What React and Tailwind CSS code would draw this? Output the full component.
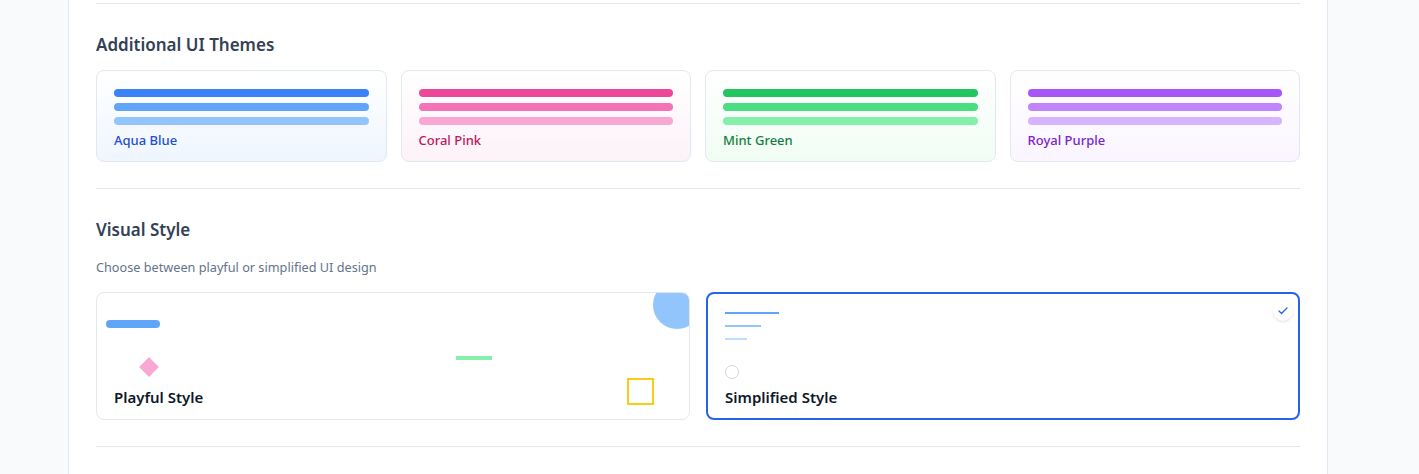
import { Check } from 'lucide-react';

const themes = [
  {
    name: 'Aqua Blue',
    card: 'to-[#eff6ff]',
    bars: ['bg-[#3b82f6]', 'bg-[#60a5fa]', 'bg-[#93c5fd]'],
    label: 'text-[#1d4ed8]',
  },
  {
    name: 'Coral Pink',
    card: 'to-[#fdf2f8]',
    bars: ['bg-[#ec4899]', 'bg-[#f472b6]', 'bg-[#f9a8d4]'],
    label: 'text-[#be185d]',
  },
  {
    name: 'Mint Green',
    card: 'to-[#f0fdf4]',
    bars: ['bg-[#22c55e]', 'bg-[#4ade80]', 'bg-[#86efac]'],
    label: 'text-[#15803d]',
  },
  {
    name: 'Royal Purple',
    card: 'to-[#faf5ff]',
    bars: ['bg-[#a855f7]', 'bg-[#c084fc]', 'bg-[#d8b4fe]'],
    label: 'text-[#7e22ce]',
  },
];

const App = () => {
  return (
    <div className="min-h-screen bg-[#f8fafc] font-['Noto_Sans',sans-serif]">
      <div className="ml-[68px] w-[1260px] min-h-screen bg-white border-x border-[#e2e8f0] px-[27px]">
        <div className="h-[3px]" />
        <div className="border-t border-[#e2e8f0]" />

        {/* Additional themes */}
        <section className="pt-[27px] pb-[26px]">
          <h3 className="text-[17px] leading-7 font-semibold text-[#334155]">Additional UI Themes</h3>
          <div className="mt-[11px] grid grid-cols-4 gap-3.5">
            {themes.map((t) => (
              <div
                key={t.name}
                className={`h-[92px] rounded-lg border border-[#e2e8f0] bg-gradient-to-b from-white ${t.card} px-[17px] pt-[18px]`}
              >
                <div className="flex flex-col gap-1.5">
                  {t.bars.map((b) => (
                    <div key={b} className={`h-2 rounded-full ${b}`} />
                  ))}
                </div>
                <p className={`mt-[5px] text-[13px] leading-5 font-medium ${t.label}`}>{t.name}</p>
              </div>
            ))}
          </div>
        </section>

        <div className="border-t border-[#e2e8f0]" />

        {/* Visual style */}
        <section className="pt-[27px] pb-[26px]">
          <h3 className="text-[17px] leading-7 font-semibold text-[#334155]">Visual Style</h3>
          <p className="mt-[13px] text-[12.7px] leading-5 text-[#64748b]">
            Choose between playful or simplified UI design
          </p>
          <div className="mt-[15px] grid grid-cols-2 gap-4">
            {/* Playful */}
            <div className="relative h-32 overflow-hidden rounded-lg border border-[#e2e8f0] bg-white">
              <span className="absolute -top-3 -right-3 w-12 h-12 rounded-full bg-[#93c5fd]" />
              <span className="absolute left-[9px] top-[27px] w-[54px] h-2 rounded-full bg-[#60a5fa]" />
              <span className="absolute left-[45px] top-[67px] w-3.5 h-3.5 rotate-45 bg-[#f9a8d4]" />
              <span className="absolute left-[359px] top-[63px] w-9 h-1 bg-[#86efac]" />
              <span className="absolute left-[530px] top-[85px] w-[27px] h-[27px] border-2 border-[#facc15]" />
              <span className="absolute left-[17px] bottom-[12px] text-[15px] leading-5 font-semibold text-[#0f172a]">
                Playful Style
              </span>
            </div>

            {/* Simplified */}
            <div className="relative h-32 rounded-lg border-2 border-[#2563eb] bg-white px-[17px] pt-[18px]">
              <div className="flex flex-col gap-[11px]">
                <div className="w-[54px] h-0.5 bg-[#60a5fa]" />
                <div className="w-9 h-0.5 bg-[#93c5fd]" />
                <div className="w-[22px] h-0.5 bg-[#bfdbfe]" />
              </div>
              <div className="mt-[25px] w-3.5 h-3.5 rounded-full border border-[#cbd5e1]" />
              <p className="mt-[8px] text-[15px] leading-5 font-semibold text-[#0f172a]">Simplified Style</p>
              <span className="absolute top-[7px] right-[5px] w-5 h-5 rounded-full bg-white shadow-sm flex items-center justify-center">
                <Check className="w-3 h-3 text-[#2563eb]" strokeWidth={2.5} />
              </span>
            </div>
          </div>
        </section>

        <div className="border-t border-[#e2e8f0]" />
      </div>
    </div>
  );
};

export default App;
